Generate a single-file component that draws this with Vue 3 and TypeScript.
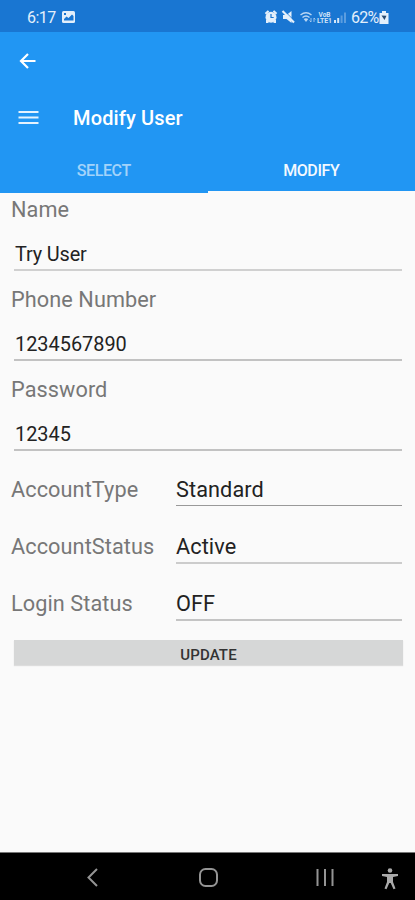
<script setup lang="ts">
import { ref } from 'vue'

interface Field { label: string; value: string; kind: string }

const textFields = ref<Field[]>([
  { label: 'Name', value: 'Try User', kind: 'soft' },
  { label: 'Phone Number', value: '1234567890', kind: 'numeric' },
  { label: 'Password', value: '12345', kind: 'numeric' },
])
const pickers = ref<Field[]>([
  { label: 'AccountType', value: 'Standard', kind: 'strong' },
  { label: 'AccountStatus', value: 'Active', kind: 'soft' },
  { label: 'Login Status', value: 'OFF', kind: 'medium' },
])
const activeTab = ref('MODIFY')
const tabs = ['SELECT', 'MODIFY']
</script>

<template>
  <div class="screen">
    <div class="status">
      <span class="time">6:17</span>
      <svg class="photo" width="13" height="12" viewBox="0 0 13 12">
        <rect width="13" height="12" rx="1.5" fill="#e3effb" />
        <path d="M2 8.5 4.5 6l2 1.500L10 4l1.500 1.500V10H2z" fill="#1976d2" transform="translate(0 -.5)" />
        <rect x="2" y="2" width="2" height="2" fill="#1976d2" />
      </svg>
      <svg class="tray" width="84" height="16" viewBox="0 0 84 16">
        <g fill="#e3effb">
          <circle cx="7" cy="8.200" r="5.500" />
          <path d="m.8 4 3-2.700 1.500 1.300L2 5.500zM13.200 4l-3-2.700-1.500 1.300L12 5.500zM2 11h2.500v3H2zM9.500 11H12v3H9.500z" />
        </g>
        <path d="M7 5v3.500h2.700" fill="none" stroke="#1976d2" stroke-width="1.200" />
        <path d="M19 6h3.500l5-4v12L22.500 10H19z" fill="#e3effb" />
        <path d="m20 1.500 11 11" stroke="#1976d2" stroke-width="1" />
        <path d="m18.500 2 11.500 11.500" stroke="#e3effb" stroke-width="2.100" />
        <g fill="none" stroke="#b9d6f3" stroke-width="1.400">
          <path d="M36.500 6q5.500-4.500 11 0M38.500 8.500q3.500-3 7 0" />
          <path d="M47 9v4m-1.500-1.500L47 13M50 13V9m0 0 1.300 1.500" stroke-width=".8" />
        </g>
        <path d="m39.700 10 2.300 3 2.300-3q-2.300-1.700-4.600 0z" fill="#b9d6f3" />
        <text x="54.500" y="7.500" textLength="12" lengthAdjust="spacingAndGlyphs">VoB</text>
        <text x="53" y="14" textLength="15" lengthAdjust="spacingAndGlyphs">LTE1</text>
        <g fill="#d6e7f8">
          <path d="M70 11h2v3h-2zM73.200 9h2v5h-2z" />
          <path d="M76.600 6.500h2V14h-2zM80 3.500h2V14h-2z" opacity=".35" />
        </g>
      </svg>
      <span class="percent">62%</span>
      <svg class="battery" width="10" height="13" viewBox="0 0 10 13">
        <path d="M3 0h4v2h2.500v11H.5V2H3z" fill="#e3effb" />
        <path d="m2.500 4.500 5 .2L5.500 9z" fill="#294b70" />
      </svg>
    </div>

    <header class="header">
      <div class="back-row">
        <svg width="18" height="18" viewBox="0 0 18 18" fill="none" stroke="#fff" stroke-width="2.200">
          <path d="M16.500 9H3M9 2 2 9l7 7" />
        </svg>
      </div>
      <div class="title-row">
        <svg width="21" height="16" viewBox="0 0 21 16">
          <path d="M.5 2h20M.5 7.500h20M.5 13h20" stroke="#e4f2fe" stroke-width="2" />
        </svg>
        <h1>Modify User</h1>
      </div>
      <nav class="tabs">
        <button v-for="tab in tabs" :key="tab" class="tab" :class="{ active: tab === activeTab }" @click="activeTab = tab">
          {{ tab }}
        </button>
      </nav>
    </header>

    <main class="form">
      <div v-for="field in textFields" :key="field.label" class="field">
        <div class="label">{{ field.label }}</div>
        <div class="value" :class="field.kind"><span>{{ field.value }}</span></div>
      </div>
      <div class="pickers">
        <div v-for="picker in pickers" :key="picker.label" class="picker">
          <div class="label">{{ picker.label }}</div>
          <div class="choice" :class="picker.kind">{{ picker.value }}</div>
        </div>
      </div>
      <button class="update">UPDATE</button>
    </main>

    <footer class="navbar">
      <svg width="415" height="47" viewBox="0 0 415 47" fill="none" stroke="#949494" stroke-width="2">
        <path d="m97 16-8.500 8.500L97 33" />
        <rect x="200" y="16" width="17" height="17" rx="5.500" />
        <path d="M317.500 16v17M325 16v17M332.500 16v17" />
        <g fill="#aaa" stroke="none">
          <circle cx="390" cy="17.500" r="2.300" />
          <path d="M382 21h16v2l-5 1v5l2.500 6.500-2 .8L390.700 30h-1.400l-2.800 6.300-2-.8L387 29v-5l-5-1z" />
        </g>
      </svg>
    </footer>
  </div>
</template>

<style>
body { background: #fafafa; }
</style>

<style scoped>
.screen {
  width: 415px;
  height: 900px;
  display: flex;
  flex-direction: column;
  overflow: hidden;
  background: #fafafa;
  font-family: Roboto, sans-serif;
}
button { border: 0; padding: 0; font-family: inherit; }
.status {
  height: 32px;
  flex: none;
  box-sizing: border-box;
  padding: 2px 0 0 27px;
  display: flex;
  align-items: center;
  background: #1976d2;
  color: #e3effb;
}
.time { width: 35px; font-size: 16px; letter-spacing: -.5px; }
.tray { margin-left: 189px; }
.tray text { font-size: 7px; font-weight: 700; fill: #d0e3f7; }
.percent { width: 28px; margin-left: 3px; font-size: 16px; letter-spacing: -.8px; }
.header { flex: none; height: 161px; background: #2196f3; display: flex; flex-direction: column; }
.back-row { height: 57px; box-sizing: border-box; padding: 20px 0 0 19px; }
.back-row svg { display: block; }
.title-row { height: 57px; display: flex; align-items: center; padding-left: 18px; }
h1 { margin: 0 0 0 34px; font-size: 20px; font-weight: 500; line-height: 24px; letter-spacing: .15px; color: #fff; }
.tabs { flex: 1; display: flex; }
.tab {
  flex: 1;
  padding-top: 4px;
  background: none;
  border-bottom: 2px solid transparent;
  color: #a3d3fa;
  font-size: 16px;
  font-weight: 500;
  letter-spacing: -.4px;
}
.tab.active { color: #f3f9ff; border-bottom-color: #fafafa; }
.form { flex: 1; padding: 0 12px 0 11px; }
.field { height: 90px; display: flex; flex-direction: column; }
.label { height: 34px; line-height: 34px; font-size: 21.700px; letter-spacing: .08px; color: #777; white-space: nowrap; }
.value {
  width: 388px;
  height: 44px;
  box-sizing: border-box;
  margin-left: 3px;
  padding-left: 1px;
  line-height: 56px;
  font-size: 19.900px;
  color: #222;
}
.value.numeric { border-bottom: 2px solid #c2c2c2; }
.value.soft { border-bottom: 2px solid #d0d0d0; letter-spacing: -.15px; }
.pickers { padding-top: 3px; }
.picker { height: 57px; display: flex; }
.picker .label { width: 165px; height: 48px; line-height: 48px; }
.choice {
  width: 226px;
  height: 40px;
  box-sizing: border-box;
  line-height: 48px;
  font-size: 21.700px;
  letter-spacing: .08px;
  color: #222;
  border-bottom: 1px solid #999;
}
.choice.soft { height: 41px; border-bottom: 2px solid #ccc; }
.choice.medium { height: 41px; border-bottom: 2px solid #c4c4c4; }
.update {
  display: block;
  width: 389px;
  height: 25px;
  margin: 3px 0 0 3px;
  padding-top: 4px;
  background: #d6d7d7;
  box-shadow: 0 1px 1px #ddd;
  font-size: 15px;
  font-weight: 500;
  letter-spacing: .15px;
  color: #333;
}
.navbar { flex: none; height: 47px; background: #000; border-top: 1px solid #777; }
.navbar svg { display: block; }
</style>
